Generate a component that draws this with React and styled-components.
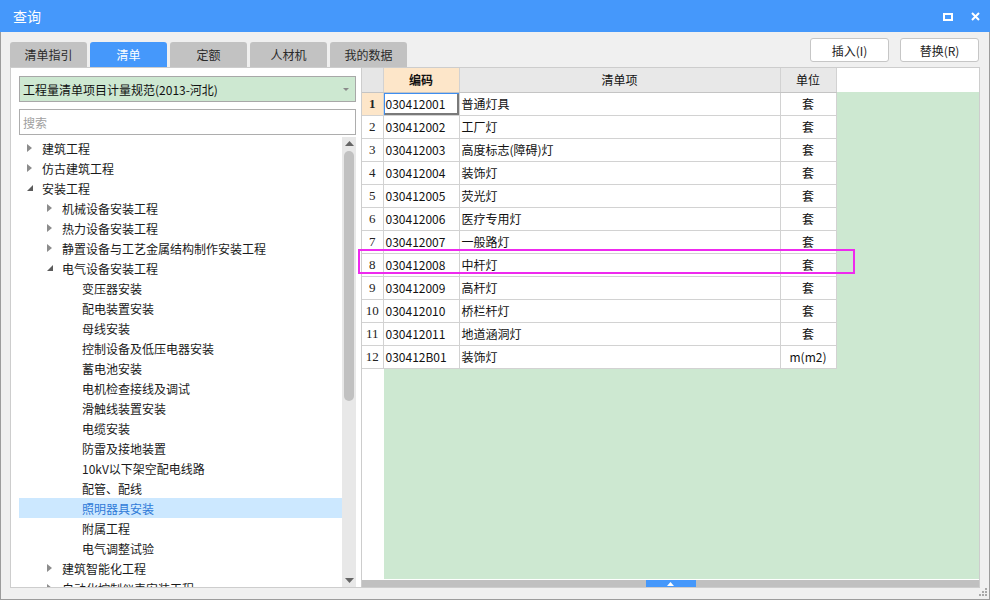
import React, { useState } from "react";
import styled, { createGlobalStyle } from "styled-components";

const GlobalStyle = createGlobalStyle`
  html, body {
    margin: 0;
    padding: 0;
    background: #f0f0f0;
  }
  * {
    box-sizing: border-box;
  }
  body {
    font-family: "Noto Sans CJK SC", "Noto Sans", sans-serif;
    font-size: 12px;
    color: #1a1a1a;
  }
`;

const BLUE = "#4598fb";
const GREEN = "#cde8d1";
const PEACH = "#fde6c9";

const tabs = ["清单指引", "清单", "定额", "人材机", "我的数据"];

const tree = [
  { level: 0, label: "建筑工程", state: "closed" },
  { level: 0, label: "仿古建筑工程", state: "closed" },
  { level: 0, label: "安装工程", state: "open" },
  { level: 1, label: "机械设备安装工程", state: "closed" },
  { level: 1, label: "热力设备安装工程", state: "closed" },
  { level: 1, label: "静置设备与工艺金属结构制作安装工程", state: "closed" },
  { level: 1, label: "电气设备安装工程", state: "open" },
  { level: 2, label: "变压器安装" },
  { level: 2, label: "配电装置安装" },
  { level: 2, label: "母线安装" },
  { level: 2, label: "控制设备及低压电器安装" },
  { level: 2, label: "蓄电池安装" },
  { level: 2, label: "电机检查接线及调试" },
  { level: 2, label: "滑触线装置安装" },
  { level: 2, label: "电缆安装" },
  { level: 2, label: "防雷及接地装置" },
  { level: 2, label: "10kV以下架空配电线路" },
  { level: 2, label: "配管、配线" },
  { level: 2, label: "照明器具安装", selected: true },
  { level: 2, label: "附属工程" },
  { level: 2, label: "电气调整试验" },
  { level: 1, label: "建筑智能化工程", state: "closed" },
  { level: 1, label: "自动化控制仪表安装工程", state: "closed" },
];

const rows = [
  ["030412001", "普通灯具", "套"],
  ["030412002", "工厂灯", "套"],
  ["030412003", "高度标志(障碍)灯", "套"],
  ["030412004", "装饰灯", "套"],
  ["030412005", "荧光灯", "套"],
  ["030412006", "医疗专用灯", "套"],
  ["030412007", "一般路灯", "套"],
  ["030412008", "中杆灯", "套"],
  ["030412009", "高杆灯", "套"],
  ["030412010", "桥栏杆灯", "套"],
  ["030412011", "地道涵洞灯", "套"],
  ["030412B01", "装饰灯", "m(m2)"],
];

const App = () => {
  const [activeTab, setActiveTab] = useState(1);
  const [search, setSearch] = useState("");

  return (
    <>
      <GlobalStyle />
      <Window>
        <TitleBar>
          <Title>查询</Title>
          <TitleIcons>
            <svg width="10" height="8" viewBox="0 0 10 8">
              <rect x="1" y="1" width="8" height="6" fill="none" stroke="#fff" strokeWidth="2" />
            </svg>
            <svg width="9" height="9" viewBox="0 0 9 9">
              <path d="M1 1 L8 8 M8 1 L1 8" stroke="#fff" strokeWidth="2" />
            </svg>
          </TitleIcons>
        </TitleBar>

        <Body>
          <TopRow>
            <Tabs>
              {tabs.map((t, i) => (
                <Tab key={t} $active={i === activeTab} onClick={() => setActiveTab(i)}>
                  {t}
                </Tab>
              ))}
            </Tabs>
            <Buttons>
              <Button>插入(I)</Button>
              <Button>替换(R)</Button>
            </Buttons>
          </TopRow>

          <Main>
            <LeftPanel>
              <Select>
                <span>工程量清单项目计量规范(2013-河北)</span>
                <SelectArrow />
              </Select>
              <Search
                placeholder="搜索"
                value={search}
                onChange={(e) => setSearch(e.target.value)}
              />
              <TreeArea>
                <TreeList>
                  {tree.map((n) => (
                    <TreeRow key={n.label} $level={n.level} $selected={n.selected}>
                      <Toggle>
                        {n.state === "closed" && (
                          <svg width="5" height="8" viewBox="0 0 5 8">
                            <path d="M0 0 L5 4 L0 8 Z" fill="#8c8c8c" />
                          </svg>
                        )}
                        {n.state === "open" && (
                          <svg width="6" height="6" viewBox="0 0 6 6">
                            <path d="M6 0 L6 6 L0 6 Z" fill="#5c5c5c" />
                          </svg>
                        )}
                      </Toggle>
                      {n.label}
                    </TreeRow>
                  ))}
                </TreeList>
                <VScroll>
                  <svg width="9" height="5" viewBox="0 0 9 5">
                    <path d="M0 5 L4.5 0 L9 5 Z" fill="#666" />
                  </svg>
                  <VThumb />
                  <svg width="9" height="5" viewBox="0 0 9 5">
                    <path d="M0 0 L4.5 5 L9 0 Z" fill="#666" />
                  </svg>
                </VScroll>
              </TreeArea>
            </LeftPanel>

            <RightPanel>
              <GridArea>
                <Grid>
                  <colgroup>
                    <col style={{ width: 21 }} />
                    <col style={{ width: 76 }} />
                    <col style={{ width: 321 }} />
                    <col style={{ width: 56 }} />
                  </colgroup>
                  <thead>
                    <tr>
                      <Corner />
                      <HeadCell $current>编码</HeadCell>
                      <HeadCell>清单项</HeadCell>
                      <HeadCell>单位</HeadCell>
                    </tr>
                  </thead>
                  <tbody>
                    {rows.map((r, i) => (
                      <tr key={r[0]}>
                        <RowHead $current={i === 0}>{i + 1}</RowHead>
                        <CodeCell $current={i === 0}>{r[0]}</CodeCell>
                        <Cell>{r[1]}</Cell>
                        <UnitCell>{r[2]}</UnitCell>
                      </tr>
                    ))}
                  </tbody>
                </Grid>
              </GridArea>
              <HScroll>
                <HThumb>
                  <svg width="7" height="4" viewBox="0 0 7 4">
                    <path d="M0 4 L3.5 0 L7 4 Z" fill="#fff" />
                  </svg>
                </HThumb>
              </HScroll>
            </RightPanel>

            <Highlight />
          </Main>
        </Body>

        <Grip width="9" height="9" viewBox="0 0 9 9">
          <rect x="6" y="0" width="2" height="2" fill="#a8a8a8" />
          <rect x="3" y="3" width="2" height="2" fill="#a8a8a8" />
          <rect x="6" y="3" width="2" height="2" fill="#a8a8a8" />
          <rect x="0" y="6" width="2" height="2" fill="#a8a8a8" />
          <rect x="3" y="6" width="2" height="2" fill="#a8a8a8" />
          <rect x="6" y="6" width="2" height="2" fill="#a8a8a8" />
        </Grip>
      </Window>
    </>
  );
};

const Window = styled.div`
  position: relative;
  width: 990px;
  height: 600px;
  display: flex;
  flex-direction: column;
  background: #f0f0f0;
  border: 1px solid #9c9c9c;
  border-top: none;
`;

const TitleBar = styled.div`
  height: 32px;
  margin: 0 -1px;
  background: ${BLUE};
  display: flex;
  align-items: center;
  justify-content: space-between;
  padding: 0 10px 0 13px;
`;

const Title = styled.span`
  color: #fff;
  font-size: 14px;
`;

const TitleIcons = styled.div`
  display: flex;
  align-items: center;
  gap: 18px;
  margin-top: 1px;
`;

const Body = styled.div`
  flex: 1;
  display: flex;
  flex-direction: column;
  padding: 0 9px 11px 9px;
  min-height: 0;
`;

const TopRow = styled.div`
  height: 35px;
  display: flex;
  justify-content: space-between;
  align-items: flex-end;
`;

const Tabs = styled.div`
  display: flex;
  gap: 3px;
`;

const Tab = styled.div`
  width: 77px;
  height: 25px;
  display: flex;
  align-items: center;
  justify-content: center;
  border-radius: 3px 3px 0 0;
  background: ${(p) => (p.$active ? BLUE : "#c2c2c2")};
  color: ${(p) => (p.$active ? "#fff" : "#2a2a2a")};
  font-size: 12px;
  cursor: default;
`;

const Buttons = styled.div`
  align-self: flex-start;
  margin-top: 6px;
  margin-right: 1px;
  display: flex;
  gap: 11px;
`;

const Button = styled.button`
  width: 79px;
  height: 24px;
  background: #fff;
  border: 1px solid #c6c6c6;
  border-radius: 3px;
  font-family: "Noto Sans CJK SC", sans-serif;
  font-size: 12px;
  color: #222;
  padding: 0;
`;

const Main = styled.div`
  position: relative;
  flex: 1;
  display: flex;
  min-height: 0;
`;

const LeftPanel = styled.div`
  width: 352px;
  display: flex;
  flex-direction: column;
  gap: 7px;
  background: #fff;
  border: 1px solid #cdcdcd;
  padding: 8px 5px 0 8px;
  overflow: hidden;
`;

const Select = styled.div`
  height: 26px;
  flex-shrink: 0;
  display: flex;
  align-items: center;
  justify-content: space-between;
  padding: 0 6px 0 3px;
  background: ${GREEN};
  border: 1px solid #a8a8a8;
  font-size: 12px;
  color: #111;
`;

const SelectArrow = styled.span`
  width: 0;
  height: 0;
  border-left: 3px solid transparent;
  border-right: 3px solid transparent;
  border-top: 3px solid #8a8a8a;
`;

const Search = styled.input`
  height: 26px;
  flex-shrink: 0;
  border: 1px solid #adadad;
  padding: 0 3px;
  font-family: "Noto Sans CJK SC", sans-serif;
  font-size: 12px;
  outline: none;
  &::placeholder {
    color: #a0a0a0;
  }
`;

const TreeArea = styled.div`
  flex: 1;
  display: flex;
  min-height: 0;
  margin-top: -5px;
`;

const TreeList = styled.div`
  flex: 1;
  overflow: hidden;
  padding-top: 1px;
`;

const TreeRow = styled.div`
  height: 20px;
  display: flex;
  align-items: center;
  padding-left: ${(p) => p.$level * 20}px;
  background: ${(p) => (p.$selected ? "#cce8ff" : "transparent")};
  color: ${(p) => (p.$selected ? "#2f7ad8" : "#1a1a1a")};
  font-size: 12px;
  white-space: nowrap;
`;

const Toggle = styled.span`
  width: 23px;
  flex-shrink: 0;
  display: flex;
  align-items: center;
  padding-left: 8px;
`;

const VScroll = styled.div`
  width: 14px;
  flex-shrink: 0;
  background: #e8e8e8;
  display: flex;
  flex-direction: column;
  align-items: center;
  padding: 4px 0 4px;
  gap: 5px;
`;

const VThumb = styled.div`
  width: 10px;
  height: 250px;
  border-radius: 5px;
  background: #c1c1c1;
  margin-bottom: auto;
`;

const RightPanel = styled.div`
  flex: 1;
  display: flex;
  flex-direction: column;
  background: #fff;
  border: 1px solid #cdcdcd;
  border-left: none;
  min-width: 0;
`;

const GridArea = styled.div`
  flex: 1;
  min-height: 0;
  overflow: hidden;
  background: linear-gradient(#fff, #fff) top left / 100% 24px no-repeat,
    linear-gradient(to right, #fff 22px, ${GREEN} 22px);
  margin-bottom: 1px;
`;

const Grid = styled.table`
  border-collapse: collapse;
  table-layout: fixed;
  width: 474px;
  background: #fff;
  font-size: 12px;

  td,
  th {
    border: 1px solid #d2d2d2;
    padding: 0;
    white-space: nowrap;
    overflow: hidden;
  }
  tr {
    height: 23px;
  }
  thead tr {
    height: 24px;
  }
`;

const Corner = styled.th`
  background: #e6e6e6;
  && {
    border-top: none;
    border-left: none;
    border-bottom-color: #c4c4c4;
  }
`;

const HeadCell = styled.th`
  background: ${(p) => (p.$current ? PEACH : "#e8e8e8")};
  font-weight: ${(p) => (p.$current ? 700 : 400)};
  color: #111;
  && {
    border-top: none;
    border-bottom-color: #c4c4c4;
  }
`;

const RowHead = styled.td`
  text-align: center;
  font-family: "Liberation Serif", serif;
  font-size: 13px;
  font-weight: ${(p) => (p.$current ? 700 : 400)};
  background: ${(p) => (p.$current ? PEACH : "#fff")};
  color: #222;
  && {
    border-left: none;
  }
`;

const CodeCell = styled.td`
  padding-left: 2px !important;
  color: #111;
  ${(p) =>
    p.$current &&
    `
    box-shadow: inset 1px 1px 0 #3f8ef0, inset -2px -2px 0 #7a7a7a;
  `}
`;

const Cell = styled.td`
  padding-left: 2px !important;
  color: #111;
`;

const UnitCell = styled.td`
  text-align: center;
  color: #111;
`;

const HScroll = styled.div`
  height: 7px;
  flex-shrink: 0;
  background: #c0c0c0;
  display: flex;
  justify-content: center;
`;

const HThumb = styled.div`
  width: 50px;
  height: 7px;
  background: ${BLUE};
  display: flex;
  align-items: center;
  justify-content: center;
`;

const Highlight = styled.div`
  position: absolute;
  left: 348px;
  top: 182px;
  width: 497px;
  height: 25px;
  border: 2px solid #ee2aee;
  pointer-events: none;
`;

const Grip = styled.svg`
  position: absolute;
  right: 1px;
  bottom: 2px;
`;

export default App;
